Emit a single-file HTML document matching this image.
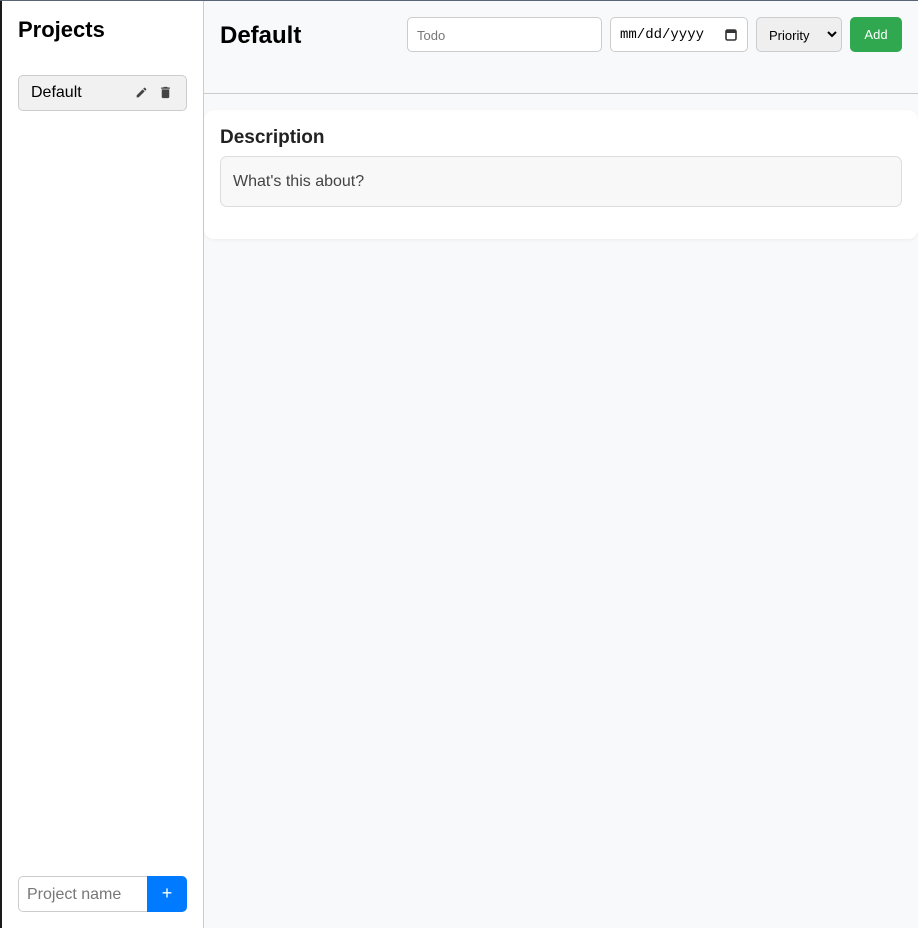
<!DOCTYPE html>
<html><head><meta charset="utf-8"><style>
*{box-sizing:border-box;margin:0;padding:0}
body{width:918px;height:928px;overflow:hidden;font-family:"Liberation Sans",Arial,sans-serif;background:#f8f9fa;position:relative}
.abs{position:absolute}
</style></head><body>
<div class="abs" style="left:0;top:0;width:2px;height:928px;background:#1a1a1a"></div>
<div class="abs" style="left:0;top:0;width:918px;height:1px;background:#5a6478"></div>
<div class="abs" style="left:2px;top:1px;width:202px;height:927px;background:#fff;border-right:1px solid #ccc"></div>
<div class="abs" style="left:18px;top:17px;font-size:22px;font-weight:bold;color:#000">Projects</div>
<div class="abs" style="left:18px;top:75px;width:169px;height:36px;background:#f1f1f1;border:1px solid #ccc;border-radius:5px"></div>
<div class="abs" style="left:31px;top:84px;font-size:16px;color:#000">Default</div>
<svg class="abs" style="left:135px;top:86px" width="13" height="13" viewBox="0 0 24 24"><path fill="#444" d="M3 17.25V21h3.75L17.81 9.94l-3.75-3.75L3 17.25zM20.71 7.04a1 1 0 000-1.41l-2.34-2.34a1 1 0 00-1.41 0l-1.83 1.83 3.75 3.75 1.83-1.83z"/></svg>
<svg class="abs" style="left:158px;top:85px" width="15" height="15" viewBox="0 0 24 24"><path fill="#444" d="M6 19c0 1.1.9 2 2 2h8c1.1 0 2-.9 2-2V7H6v12zM19 4h-3.5l-1-1h-5l-1 1H5v2h14V4z"/></svg>
<div class="abs" style="left:18px;top:876px;width:130px;height:36px;border:1px solid #ccc;border-right:none;border-radius:5px 0 0 5px;background:#fff"></div>
<div class="abs" style="left:27px;top:886px;font-size:16px;color:#777">Project name</div>
<div class="abs" style="left:147px;top:876px;width:40px;height:36px;background:#007bff;border-radius:0 5px 5px 0;color:#fff;font-size:18px;text-align:center;line-height:35px">+</div>

<div class="abs" style="left:220px;top:22px;font-size:24px;font-weight:bold;color:#000">Default</div>
<div class="abs" style="left:407px;top:17px;width:195px;height:35px;background:#fff;border:1px solid #ccc;border-radius:5px;font-size:13px;color:#777;padding:10px 9px">Todo</div>
<div class="abs" style="left:610px;top:17px;width:138px;height:35px;background:#fff;border:1px solid #ccc;border-radius:5px;font-family:'Liberation Mono',monospace;font-size:14px;color:#000;padding:9px 9px">mm/dd/yyyy</div>
<svg class="abs" style="left:725px;top:28px" width="12" height="13" viewBox="0 0 12 13"><rect x="1" y="2" width="10" height="10" rx="1.5" fill="none" stroke="#333" stroke-width="1.6"/><rect x="1" y="2" width="10" height="3" fill="#333"/></svg>
<div class="abs" style="left:756px;top:17px;width:86px;height:35px;background:#efefef;border:1px solid #ccc;border-radius:5px;font-size:13px;color:#000;padding:10px 12px">Priority</div>
<svg class="abs" style="left:827px;top:30px" width="10" height="8" viewBox="0 0 10 8"><path d="M1 2l4 4 4-4" stroke="#000" stroke-width="2" fill="none"/></svg>
<div class="abs" style="left:850px;top:17px;width:52px;height:35px;background:#2fa84f;border-radius:5px;font-size:13px;color:#fff;text-align:center;line-height:35px">Add</div>
<div class="abs" style="left:204px;top:93px;width:714px;height:1px;background:#ccc"></div>

<div class="abs" style="left:204px;top:110px;width:714px;height:129px;background:#fff;border-radius:10px;box-shadow:0 1px 3px rgba(0,0,0,.05)"></div>
<div class="abs" style="left:220px;top:127px;font-size:19px;font-weight:bold;color:#222">Description</div>
<div class="abs" style="left:220px;top:156px;width:682px;height:51px;background:#f8f8f8;border:1px solid #ddd;border-radius:7px;font-size:16px;color:#444;padding:16px 12px">What's this about?</div>
</body></html>
